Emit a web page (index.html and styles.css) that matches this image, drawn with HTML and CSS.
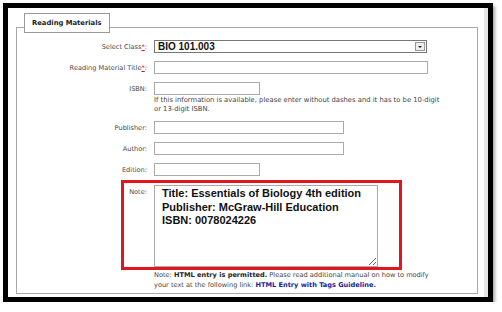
FILE: index.html
```html
<!DOCTYPE html>
<html lang="en">

<head>
    <meta charset="UTF-8">
    <meta name="viewport" content="width=device-width, initial-scale=1.0">
    <title>Reading Materials</title>
    <link rel="stylesheet" href="styles.css">
</head>

<body>
    <div class="frame">
        <div class="panel">
            <div class="panel-title">Reading Materials</div>

            <div class="row">
                <label class="label">Select Class<span class="req">*</span>:</label>
                <div class="select">
                    <span class="select-value">BIO 101.003</span>
                    <span class="select-btn"><span class="caret"></span></span>
                </div>
            </div>

            <div class="row">
                <label class="label">Reading Material Title<span class="req">*</span>:</label>
                <input type="text" class="field field-long">
            </div>

            <div class="row row-tight">
                <label class="label">ISBN:</label>
                <input type="text" class="field field-short">
            </div>
            <p class="hint hint-isbn">If this information is available, please enter without dashes and it has to be <span class="nowrap">10-digit</span> or 13-digit ISBN.</p>

            <div class="row">
                <label class="label">Publisher:</label>
                <input type="text" class="field field-mid">
            </div>

            <div class="row">
                <label class="label">Author:</label>
                <input type="text" class="field field-mid">
            </div>

            <div class="row row-last">
                <label class="label">Edition:</label>
                <input type="text" class="field field-short">
            </div>

            <div class="highlight">
                <label class="label label-note">Note:</label>
                <textarea class="note-text">Title: Essentials of Biology 4th edition
Publisher: McGraw-Hill Education
ISBN: 0078024226</textarea>
            </div>

            <p class="hint hint-note">Note: <b>HTML entry is permitted.</b> Please read additional manual on how to modify your text at the following link: <a href="#" class="guide-link">HTML Entry with Tags Guideline.</a></p>
        </div>
    </div>
</body>

</html>
```

FILE: styles.css
```css
body {
    margin: 0;
    background: #fff;
    font-family: "DejaVu Sans", Verdana, sans-serif;
    color: #444;
}

.frame {
    display: flex;
    flex-direction: column;
    box-sizing: border-box;
    width: 490px;
    height: 299px;
    margin: 3px 0 0 3px;
    border: 5px solid #000;
    background: #fff;
    box-shadow: inset -4px 0 0 #e6e6e6, 2px 3px 3px rgba(0, 0, 0, 0.35);
}

.panel {
    flex: 1;
    margin: 19px 10px 3px 8px;
    border: 1px solid #a8a8a8;
}

.panel-title {
    width: max-content;
    height: 20px;
    box-sizing: border-box;
    margin: -15px 0 7px 7px;
    padding: 0 7px;
    border: 1px solid #999;
    background: #fff;
    color: #222;
    font-size: 6.8px;
    font-weight: bold;
    line-height: 18px;
}

.row {
    display: flex;
    align-items: center;
    height: 13px;
    margin-bottom: 8px;
}

.row-tight {
    margin-bottom: 1px;
}

.row-last {
    margin-bottom: 4px;
}

.label {
    width: 130px;
    margin-right: 7px;
    text-align: right;
    font-size: 6.6px;
    color: #4a4a4a;
}

.req {
    color: #e01010;
    text-decoration: underline;
}

.field {
    box-sizing: border-box;
    height: 13px;
    margin: 0;
    padding: 0 2px;
    border: 1px solid #aaa;
    background: #fff;
}

.field-long {
    width: 274px;
}

.field-mid {
    width: 190px;
}

.field-short {
    width: 106px;
}

.select {
    display: flex;
    align-items: center;
    justify-content: space-between;
    box-sizing: border-box;
    width: 273px;
    height: 13px;
    padding: 0 1px 0 3px;
    border: 1px solid #777;
    background: #fff;
}

.select-value {
    font-family: "Liberation Sans", Arial, sans-serif;
    font-size: 10px;
    font-weight: bold;
    color: #111;
}

.select-btn {
    display: flex;
    align-items: center;
    justify-content: center;
    box-sizing: border-box;
    width: 10px;
    height: 9px;
    border: 1px solid #999;
    background: #eee;
}

.caret {
    width: 0;
    height: 0;
    border-left: 2px solid transparent;
    border-right: 2px solid transparent;
    border-top: 2px solid #222;
}

.hint {
    margin: 0 0 7px 137px;
    font-size: 6.6px;
    line-height: 9px;
    color: #444;
}

.hint-isbn {
    width: 290px;
    height: 18px;
    font-size: 6.8px;
}

.nowrap {
    white-space: nowrap;
}

.hint-note {
    width: 278px;
    margin-top: 1px;
    margin-bottom: 0;
    line-height: 9.5px;
}

.hint b {
    color: #222;
}

.guide-link {
    color: #1c1c96;
    font-weight: bold;
    text-decoration: none;
}

.highlight {
    display: flex;
    align-items: flex-start;
    width: 281px;
    box-sizing: border-box;
    margin-left: 104px;
    padding-top: 2px;
    border: 3px solid #e3161e;
}

.label-note {
    width: 23px;
    margin-top: 3px;
}

.note-text {
    box-sizing: border-box;
    width: 224px;
    height: 82px;
    margin: 0;
    padding: 1px 7px;
    border: 1px solid #aaa;
    font-family: "Liberation Sans", Arial, sans-serif;
    font-size: 11px;
    font-weight: bold;
    line-height: 13.5px;
    color: #111;
    resize: vertical;
}
```
